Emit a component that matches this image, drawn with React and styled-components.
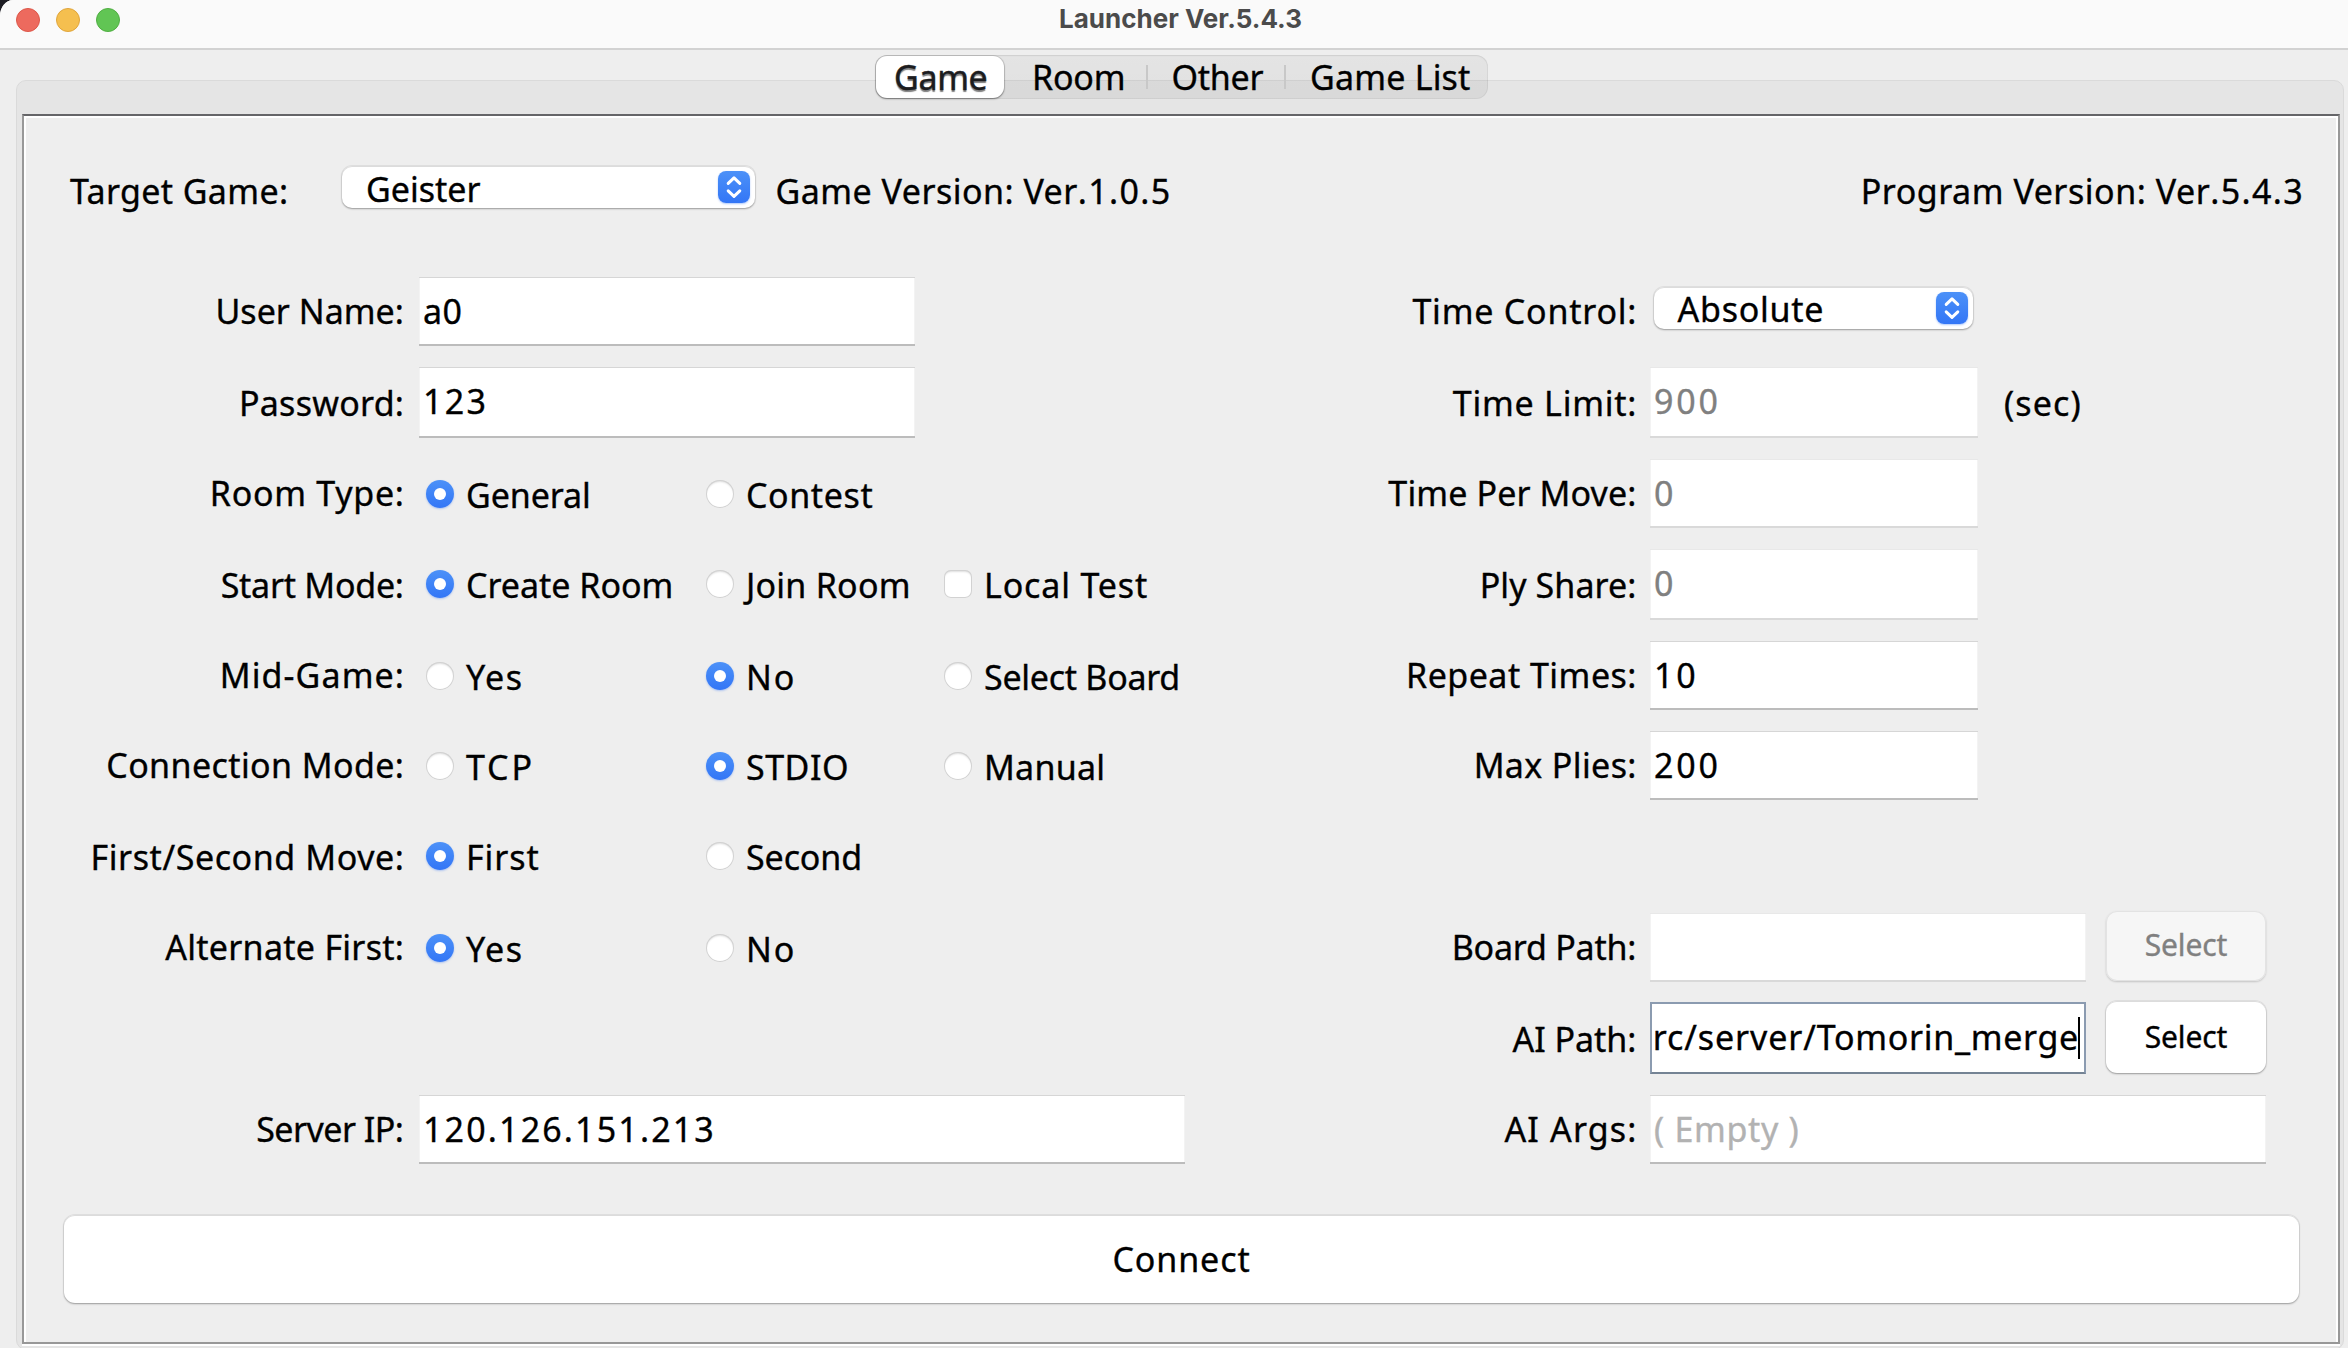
import React from "react";
import styled, { createGlobalStyle, css } from "styled-components";

const GlobalStyle = createGlobalStyle`
  * { box-sizing: border-box; }
  html, body { margin: 0; background: #1d1d24; overflow: hidden; }
`;

const Window = styled.div`
  height: 1348px;
  width: 2348px;
  overflow: hidden;
  display: flex;
  flex-direction: column;
  background: #eeeeee;
  border-top-left-radius: 13px 16px;
  font-family: "Noto Sans", "Open Sans", sans-serif;
  font-size: 34px;
  line-height: 46px;
  color: #000;
  white-space: pre;
  -webkit-text-stroke-width: 0.35px;
`;

const TitleBar = styled.header`
  flex: none;
  height: 50px;
  display: flex;
  align-items: flex-start;
  padding: 0 107px 0 16px;
  background: #fafafa;
  border-bottom: 2px solid #d2d2d2;
`;

const Lights = styled.div`
  display: flex;
  gap: 16px;
  padding-top: 8px;
`;

const Light = styled.span`
  width: 24px;
  height: 24px;
  border-radius: 50%;
  background: ${(p) => p.$fill};
  border: 1px solid ${(p) => p.$edge};
`;

const Title = styled.h1`
  flex: 1;
  margin: 0;
  text-align: center;
  font: 700 26px/37px Inter, "Liberation Sans", sans-serif;
  color: #4b4b4b;
  -webkit-text-stroke-width: 0;
`;

const TabRow = styled.nav`
  flex: none;
  position: relative;
  z-index: 1;
  display: flex;
  justify-content: center;
  padding: 5px 3px 0 17px;
`;

const TabStrip = styled.div`
  display: flex;
  width: 613px;
  height: 44px;
  padding: 1px;
  border-radius: 12px;
  background: linear-gradient(rgba(0, 0, 0, 0.045), rgba(0, 0, 0, 0.055));
  box-shadow: inset 0 0 0 1px rgba(0, 0, 0, 0.045), inset 0 1px 2px rgba(0, 0, 0, 0.05);
`;

const Tab = styled.div`
  width: ${(p) => p.$w}px;
  height: 42px;
  padding-left: ${(p) => p.$pad}px;
  line-height: 42px;
  letter-spacing: ${(p) => p.$ls || 0}px;
  ${(p) =>
    p.$active &&
    css`
      color: #1c1c1e;
      background: #fff;
      border-radius: 11px;
      line-height: 43px;
      text-shadow: 0 2px 1px rgba(0, 0, 0, 0.5);
      box-shadow: 0 0 0 1px rgba(0, 0, 0, 0.1), 0 1px 2px rgba(0, 0, 0, 0.4);
    `}
`;

const TabDivider = styled.span`
  width: 2px;
  height: 24px;
  margin: 9px -1px 0;
  background: #c8c8c8;
`;

const Pane = styled.div`
  flex: none;
  height: 1270px;
  margin: -19px 4px 0 16px;
  padding: 33px 3px 0 5px;
  border: 1px solid #dadada;
  border-radius: 10px;
  background: #e5e5e5;
`;

const Panel = styled.main`
  height: 1230px;
  display: flex;
  flex-direction: column;
  padding: 50px 0 0;
  background: #eeeeee;
  border: 2px solid #989898;
  border-top-color: #656568;
  box-shadow: inset 2px 2px 0 #fff, inset -2px 0 0 #fff, 0 2px 0 #fff;
`;

const Header = styled.div`
  display: flex;
  height: 42px;
  padding: 0 34px 0 46px;
`;

const Caption = styled.span`
  padding-top: 2px;
  letter-spacing: ${(p) => p.$ls}px;
  ${(p) => p.$w && `width: ${p.$w}px;`}
  margin-left: ${(p) => (p.$end ? "auto" : `${p.$gap || 0}px`)};
`;

const Digits = styled.span`
  letter-spacing: 1.35px;
`;

const Combo = styled.div`
  display: flex;
  width: ${(p) => p.$w}px;
  height: 42px;
  padding: 5px 5px 0 24px;
  border-radius: 10px;
  background: #fff;
  box-shadow: inset 0 1px 0 #dcdcdc, 0 0 0 1px rgba(0, 0, 0, 0.05), 0 1px 2px rgba(0, 0, 0, 0.32);
  ${(p) => p.$inForm && "margin: 10px 0 0 3.5px;"}
`;

const ComboText = styled.span`
  flex: 1;
  margin-top: -5px;
  line-height: ${(p) => p.$lh}px;
  letter-spacing: ${(p) => p.$ls}px;
`;

const Stepper = styled.span`
  display: grid;
  place-items: center;
  width: 32px;
  height: 32px;
  border-radius: 8px;
  background: linear-gradient(#4c91f8, #3376f6);
  box-shadow: 0 1px 2px rgba(51, 118, 246, 0.4);
`;

const Forms = styled.div`
  display: flex;
  justify-content: space-between;
  margin-top: 69px;
  padding: 0 72px 0 40px;
`;

const Form = styled.div`
  display: grid;
  row-gap: 21px;
  grid-template-rows: 69px 71px 69px 71px 69px 69px 71px 69px 71px 69px;
`;

const Row = styled.div`
  display: grid;
  grid-template-columns: ${(p) => (p.$right ? "337px 616px" : "340.5px 766px")};
  column-gap: ${(p) => (p.$right ? 13 : 14.5)}px;
`;

const Label = styled.label`
  align-self: end;
  justify-self: end;
  padding-bottom: 12px;
  letter-spacing: ${(p) => p.$ls - 0.12}px;
  margin-right: ${(p) => 0.7 - p.$ls}px;
`;

const Controls = styled.div`
  display: flex;
  align-items: flex-start;
`;

const Field = styled.div`
  width: ${(p) => p.$w}px;
  height: 100%;
  padding: 10px 4px 0 4px;
  background: #fff;
  letter-spacing: ${(p) => p.$ls || 0}px;
  color: ${(p) => (p.$disabled ? "#808080" : p.$hint ? "#b2b2b2" : "#000")};
  border-top: 1px solid ${(p) => (p.$disabled ? "#e8e8e8" : "#d6d6d6")};
  border-bottom: 2px solid ${(p) => (p.$disabled ? "#d9d9d9" : "#bcbcbc")};
  box-shadow: inset 1px 0 0 #f3f3f3, inset -1px 0 0 #f3f3f3;
`;

const FocusedField = styled.div`
  display: flex;
  width: 436px;
  height: 72px;
  margin-top: -1px;
  padding: 10px 4px 0 2px;
  background: #fff;
  border: 2px solid #8b9bb0;
  border-bottom-color: #748394;
`;

const FieldClip = styled.div`
  flex: 1;
  display: flex;
  justify-content: flex-end;
  overflow: hidden;
  letter-spacing: 0.9px;
`;

const FileName = styled.span`
  letter-spacing: 0.7px;
`;

const Caret = styled.span`
  flex: none;
  width: 2px;
  height: 42px;
  margin-top: 3px;
  margin-left: -1px;
  background: #000;
`;

const Option = styled.div`
  display: flex;
  gap: 12px;
  width: ${(p) => p.$w}px;
  padding-top: 13px;
  letter-spacing: ${(p) => p.$ls - 0.15}px;
`;

const Options = styled(Controls)`
  padding-left: 7px;
`;

const Mark = styled.span`
  flex: none;
  display: grid;
  place-items: center;
  width: 28px;
  height: 28px;
  margin-top: 8px;
  border-radius: ${(p) => (p.$square ? "7px" : "50%")};
  background: #fff;
  box-shadow: inset 0 0 0 1px #d2d2d2, inset 0 2px 2px rgba(0, 0, 0, 0.13);
  ${(p) =>
    p.$on &&
    css`
      background: linear-gradient(#4c91f8, #3376f6);
      box-shadow: 0 1px 2px rgba(51, 118, 246, 0.35);
      &::after {
        content: "";
        width: 12px;
        height: 12px;
        border-radius: 50%;
        background: #fff;
      }
    `}
`;

const Unit = styled.span`
  padding: 13px 0 0 26px;
  letter-spacing: 1.1px;
`;

const Button = styled.button`
  display: flex;
  justify-content: center;
  align-items: flex-end;
  width: 160px;
  height: ${(p) => p.$h}px;
  margin: -2px 0 0 20px;
  padding: 0 0 16px;
  border: 0;
  border-radius: 11px;
  font: 30px/41px "Noto Sans", sans-serif;
  letter-spacing: -0.1px;
  color: #000;
  background: #fff;
  box-shadow: inset 0 1px 0 #dcdcdc, 0 0 0 1px rgba(0, 0, 0, 0.05), 0 1px 2px rgba(0, 0, 0, 0.32);
  ${(p) =>
    p.disabled &&
    css`
      color: #808080;
      background: #f6f6f6;
      box-shadow: inset 0 0 0 1px #e3e3e3, 0 1px 2px rgba(0, 0, 0, 0.18);
    `}
`;

const ConnectButton = styled(Button)`
  width: 2235px;
  height: 88px;
  margin: 51px 0 0 40px;
  padding-bottom: 21px;
  font-size: 34px;
  line-height: 46px;
  letter-spacing: 0.9px;
`;

function Arrows() {
  return (
    <Stepper>
      <svg width="32" height="32" viewBox="0 0 32 32" fill="none" stroke="#fff" strokeWidth="3" strokeLinecap="round" strokeLinejoin="round">
        <path d="M10.2 12.4 16 6.8l5.8 5.6M10.2 19.8l5.8 5.6 5.8-5.6" />
      </svg>
    </Stepper>
  );
}

function Select({ text, ls, w, lh = 45, inForm }) {
  return (
    <Combo $w={w} $inForm={inForm}>
      <ComboText $ls={ls} $lh={lh}>{text}</ComboText>
      <Arrows />
    </Combo>
  );
}

const WIDTHS = [280, 238, 240];

function Choices({ items }) {
  return (
    <Options>
      {items.map(([text, ls, on, square], i) => (
        <Option key={text} $w={WIDTHS[i]} $ls={ls}>
          <Mark $on={on} $square={square} />
          {text}
        </Option>
      ))}
    </Options>
  );
}

function FormRow({ label, ls, right, children }) {
  return (
    <Row $right={right}>
      <Label $ls={ls}>{label}</Label>
      {children}
    </Row>
  );
}

const OPTION_ROWS = [
  ["Room Type:", 0.83, [["General", 0.07, true], ["Contest", 0.75]]],
  ["Start Mode:", -0.13, [["Create Room", 0.13, true], ["Join Room", 0.4], ["Local Test", 0.99, false, true]]],
  ["Mid-Game:", 1.22, [["Yes", 1.64], ["No", 2.16, true], ["Select Board", -0.12]]],
  ["Connection Mode:", 0.52, [["TCP", 3], ["STDIO", 0.65, true], ["Manual", 0.4]]],
  ["First/Second Move:", 0.71, [["First", 1.06, true], ["Second", 0.05]]],
  ["Alternate First:", 0.4, [["Yes", 1.64, true], ["No", 2.16]]],
];

const NUMBER_ROWS = [
  ["Time Per Move:", 0.25, "0", true],
  ["Ply Share:", 0.21, "0", true],
  ["Repeat Times:", 0.6, "10", false],
  ["Max Plies:", 0.49, "200", false],
];

export default function App() {
  return (
    <>
      <GlobalStyle />
      <Window>
        <TitleBar>
          <Lights>
            <Light $fill="#ed6a5e" $edge="#dc5749" />
            <Light $fill="#f5bf4f" $edge="#dfa53c" />
            <Light $fill="#61c554" $edge="#50ae42" />
          </Lights>
          <Title>Launcher Ver.5.4.3</Title>
        </TitleBar>

        <TabRow>
          <TabStrip>
            <Tab $active $w={128} $pad={18.5} $ls={-0.35}>Game</Tab>
            <Tab $w={143.5} $pad={28.5} $ls={-0.2}>Room</Tab>
            <TabDivider />
            <Tab $w={138} $pad={24.5} $ls={-0.25}>Other</Tab>
            <TabDivider />
            <Tab $w={201} $pad={25} $ls={0.2}>Game List</Tab>
          </TabStrip>
        </TabRow>

        <Pane>
          <Panel>
            <Header>
              <Caption $w={272} $ls={0.36}>Target Game:</Caption>
              <Select text="Geister" ls={0} w={413} lh={47} />
              <Caption $gap={20.5} $ls={0.48}>
                Game Version: Ver<Digits>.1.0.5</Digits>
              </Caption>
              <Caption $end $ls={0.53}>
                Program Version: Ver<Digits>.5.4.3</Digits>
              </Caption>
            </Header>

            <Forms>
              <Form>
                <FormRow label="User Name:" ls={0.15}>
                  <Field $w={496} $ls={0.5}>a0</Field>
                </FormRow>
                <FormRow label="Password:" ls={0.38}>
                  <Field $w={496} $ls={2.3}>123</Field>
                </FormRow>
                {OPTION_ROWS.map(([label, ls, items]) => (
                  <FormRow key={label} label={label} ls={ls}>
                    <Choices items={items} />
                  </FormRow>
                ))}
                <div />
                <FormRow label="Server IP:" ls={-0.4}>
                  <Field $w={766} $ls={2.15}>120.126.151.213</Field>
                </FormRow>
              </Form>

              <Form>
                <FormRow right label="Time Control:" ls={0.9}>
                  <Select text="Absolute" ls={0.76} w={319} inForm />
                </FormRow>
                <FormRow right label="Time Limit:" ls={0.88}>
                  <Controls>
                    <Field $w={328} $ls={2.8} $disabled>900</Field>
                    <Unit>(sec)</Unit>
                  </Controls>
                </FormRow>
                {NUMBER_ROWS.map(([label, ls, value, disabled]) => (
                  <FormRow key={label} right label={label} ls={ls}>
                    <Field $w={328} $ls={2.8} $disabled={disabled}>{value}</Field>
                  </FormRow>
                ))}
                <div />
                <FormRow right label="Board Path:" ls={-0.1}>
                  <Controls>
                    <Field $w={436} $disabled />
                    <Button disabled $h={70}>Select</Button>
                  </Controls>
                </FormRow>
                <FormRow right label="AI Path:" ls={0.1}>
                  <Controls>
                    <FocusedField>
                      <FieldClip>
                        <span>rc/server/<FileName>Tomorin_merge</FileName></span>
                      </FieldClip>
                      <Caret />
                    </FocusedField>
                    <Button $h={72}>Select</Button>
                  </Controls>
                </FormRow>
                <FormRow right label="AI Args:" ls={1.28}>
                  <Field $w={616} $ls={0.68} $hint>( Empty )</Field>
                </FormRow>
              </Form>
            </Forms>

            <ConnectButton>Connect</ConnectButton>
          </Panel>
        </Pane>
      </Window>
    </>
  );
}
